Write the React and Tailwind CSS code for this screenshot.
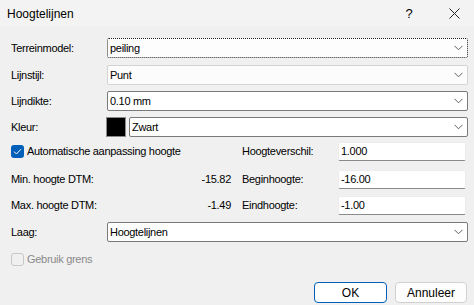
import React from 'react';

const Chevron = () => (
  <svg width="9" height="6" viewBox="0 0 9 6" className="shrink-0">
    <path d="M0.5 0.8 L4.5 4.8 L8.5 0.8" fill="none" stroke="#606060" strokeWidth="1" />
  </svg>
);

const Combo = ({ value, variant = 'edit', className = '' }) => {
  const styles = {
    focus: 'border border-dotted border-[#202020] bg-[#fdfdfd]',
    list: 'border border-[#d4d4d4] bg-[#fcfcfc]',
    edit: 'border border-[#7a7a7a] bg-white',
  };
  return (
    <div className={`h-[20px] flex items-center justify-between pl-[2px] pr-[4px] rounded-[2px] ${styles[variant]} ${className}`}>
      <span>{value}</span>
      <Chevron />
    </div>
  );
};

const TextBox = ({ value }) => (
  <div className="h-[19px] w-[128px] flex items-center pl-[2px] bg-white border border-[#ececec] border-b-[#8a8a8a] rounded-[2px]">
    {value}
  </div>
);

const Check = ({ checked, disabled, label }) => (
  <div className="flex items-center gap-[3px]">
    {checked ? (
      <div className="w-[13px] h-[13px] rounded-[3px] bg-[#005fb8] flex items-center justify-center">
        <svg width="9" height="7" viewBox="0 0 9 7">
          <path d="M1 3.6 L3.4 6 L8 1.2" fill="none" stroke="white" strokeWidth="1" />
        </svg>
      </div>
    ) : (
      <div className="w-[13px] h-[13px] rounded-[3px] border border-[#c8c8c8] bg-[#f0f0f0]" />
    )}
    <span className={disabled ? 'text-[#8a8a8a]' : ''}>{label}</span>
  </div>
);

export default function App() {
  return (
    <div
      className="w-[474px] h-[305px] bg-[#f0f0f0] text-black text-[11px] tracking-[-0.3px] overflow-hidden"
      style={{ fontFamily: '"Liberation Sans", Arial, sans-serif' }}
    >
      {/* title bar */}
      <div className="h-[27px] bg-[#f3f3f3] flex items-center pl-[7px] text-[12px] tracking-normal">
        <span className="flex-1">Hoogtelijnen</span>
        <span className="w-[14px] text-center text-[13px] mr-[33px]">?</span>
        <svg width="11" height="11" viewBox="0 0 11 11" className="mr-[14px]">
          <path d="M0.5 0.5 L10.5 10.5 M10.5 0.5 L0.5 10.5" stroke="#222" strokeWidth="1" />
        </svg>
      </div>

      <div className="pl-[11px] pr-[6px] pt-[11px] flex flex-col">
        <div className="flex items-center h-[20px]">
          <span className="w-[96px]">Terreinmodel:</span>
          <Combo value="peiling" variant="focus" className="flex-1" />
        </div>
        <div className="flex items-center h-[20px] mt-[7px]">
          <span className="w-[96px]">Lijnstijl:</span>
          <Combo value="Punt" variant="list" className="flex-1" />
        </div>
        <div className="flex items-center h-[20px] mt-[6px]">
          <span className="w-[96px]">Lijndikte:</span>
          <Combo value="0.10 mm" className="flex-1" />
        </div>
        <div className="flex items-center h-[20px] mt-[6px]">
          <span className="w-[95px]">Kleur:</span>
          <div className="w-[20px] h-[20px] bg-black border border-[#8a8a8a] mr-[3px]" />
          <Combo value="Zwart" className="flex-1" />
        </div>

        <div className="flex mt-[5px]">
          <div className="w-[220px] flex flex-col">
            <div className="h-[19px] flex items-center">
              <Check checked label="Automatische aanpassing hoogte" />
            </div>
            <div className="h-[19px] mt-[9px] flex items-center justify-between">
              <span>Min. hoogte DTM:</span>
              <span>-15.82</span>
            </div>
            <div className="h-[19px] mt-[7px] flex items-center justify-between">
              <span>Max. hoogte DTM:</span>
              <span>-1.49</span>
            </div>
          </div>
          <div className="ml-[11px] flex-1 flex flex-col pr-[2px]">
            <div className="h-[19px] flex items-center justify-between">
              <span>Hoogteverschil:</span>
              <TextBox value="1.000" />
            </div>
            <div className="h-[19px] mt-[9px] flex items-center justify-between">
              <span>Beginhoogte:</span>
              <TextBox value="-16.00" />
            </div>
            <div className="h-[19px] mt-[7px] flex items-center justify-between">
              <span>Eindhoogte:</span>
              <TextBox value="-1.00" />
            </div>
          </div>
        </div>

        <div className="flex items-center h-[20px] mt-[7px]">
          <span className="w-[96px]">Laag:</span>
          <Combo value="Hoogtelijnen" className="flex-1" />
        </div>

        <div className="h-[13px] mt-[11px] flex items-center">
          <Check disabled label="Gebruik grens" />
        </div>

        <div className="flex justify-end gap-[8px] mt-[16px] pr-[1px]">
          <button className="w-[73px] h-[21px] rounded-[4px] border border-[#005fb8] bg-white text-[12px] tracking-normal">
            OK
          </button>
          <button className="w-[72px] h-[21px] rounded-[4px] border border-[#d0d0d0] bg-[#fdfdfd] text-[12px] tracking-normal">
            Annuleer
          </button>
        </div>
      </div>
    </div>
  );
}
